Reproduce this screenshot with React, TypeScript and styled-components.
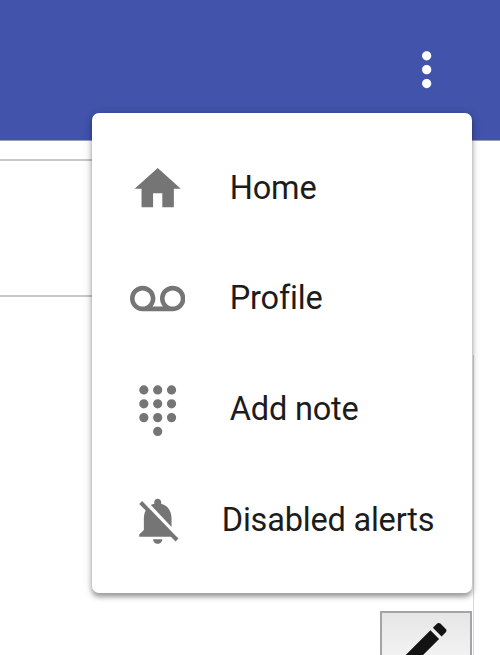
import React from "react";
import styled, { createGlobalStyle } from "styled-components";

const GlobalStyle = createGlobalStyle`
  * { box-sizing: border-box; }
  html, body { margin: 0; overflow: hidden; background: #fff; }
  body { font-family: Roboto, sans-serif; }
`;

const Page = styled.div`
  position: relative;
  display: flex;
  flex-direction: column;
  width: 500px;
  height: 655px;
  overflow: hidden;
  background: #fff;
`;

const Toolbar = styled.header`
  display: flex;
  flex: none;
  align-items: flex-start;
  justify-content: flex-end;
  height: 140.5px;
  padding: 41.5px 46px 0 0;
  background: linear-gradient(#4153aa, #4153aa) 0 0 / 100% 140px no-repeat, #9a9eb8;
`;

const IconButton = styled.button`
  display: flex;
  padding: 0;
  border: 0;
  background: none;
  color: #fff;
`;

const Glyph = styled.svg`
  display: block;
  flex: none;
  width: 55.4px;
  height: 55.4px;
  fill: currentColor;
`;

const Content = styled.main`
  display: flex;
  flex: 1;
  flex-direction: column;
  width: 474px;
  padding-top: 18.5px;
`;

const Field = styled.div`
  flex: none;
  width: 460px;
  height: 138px;
  border: 2px solid #c8c8c8;
  border-width: 2px 0;
`;

const Panel = styled.div`
  display: flex;
  flex: 1;
  align-items: flex-end;
  justify-content: flex-end;
  margin-top: 58px;
  padding-right: 1px;
  border-right: 1px solid #d8d8d8;
`;

const EditButton = styled.button`
  display: flex;
  flex: none;
  width: 92px;
  height: 44px;
  padding: 2.7px 0 0 15.6px;
  overflow: hidden;
  border: 2px solid #a3a3a8;
  border-bottom: 0;
  background: linear-gradient(#e6e6e6, #f2f2f2);
  color: #131313;
`;

const Menu = styled.ul`
  position: absolute;
  top: 113px;
  left: 92px;
  display: flex;
  flex-direction: column;
  width: 380px;
  height: 479.5px;
  margin: 0;
  padding: 20.9px 0 0;
  border-radius: 7px;
  background: #fff;
  box-shadow: 0 4px 4px rgba(0, 0, 0, 0.25), 0 2px 8px rgba(0, 0, 0, 0.26);
  list-style: none;
`;

const MenuItem = styled.li`
  display: flex;
  flex: none;
  align-items: center;
  height: 110.6px;
  padding-left: 37.5px;
  color: #757575;
`;

const Label = styled.span<{ $gap: number }>`
  margin: -2.6px 0 0 ${(p) => p.$gap}px;
  color: #1c1c1c;
  font-size: 32.5px;
  letter-spacing: -0.2px;
  line-height: 40px;
  white-space: nowrap;
`;

const paths = {
  more: "M12 8c1.1 0 2-.9 2-2s-.9-2-2-2-2 .9-2 2 .9 2 2 2zm0 2c-1.1 0-2 .9-2 2s.9 2 2 2 2-.9 2-2-.9-2-2-2zm0 6c-1.1 0-2 .9-2 2s.9 2 2 2 2-.9 2-2-.9-2-2-2z",
  home: "M10 20v-6h4v6h5v-8h3L12 3 2 12h3v8z",
  voicemail:
    "M18.5 6C15.46 6 13 8.46 13 11.5c0 1.33.47 2.55 1.26 3.5H9.74c.79-.95 1.26-2.17 1.26-3.5C11 8.46 8.54 6 5.5 6S0 8.46 0 11.5 2.46 17 5.5 17h13c3.04 0 5.5-2.46 5.5-5.5S21.54 6 18.5 6zm-13 9C3.57 15 2 13.43 2 11.5S3.57 8 5.5 8 9 9.57 9 11.5 7.43 15 5.5 15zm13 0c-1.93 0-3.5-1.57-3.5-3.5S16.57 8 18.5 8 22 9.57 22 11.5 20.43 15 18.5 15z",
  dialpad: [
    [6, 3], [12, 3], [18, 3],
    [6, 9], [12, 9], [18, 9],
    [6, 15], [12, 15], [18, 15],
    [12, 21],
  ]
    .map(([x, y]) => `M${x - 2} ${y}a2 2 0 1 0 4 0a2 2 0 1 0-4 0z`)
    .join(""),
  alertsOff:
    "M20 18.69L7.84 6.14 5.27 3.49 4 4.76l2.8 2.8v.01c-.52.99-.8 2.16-.8 3.42v5l-2 2v1h13.73l2 2L21 19.72l-1-1.03zM12 22c1.11 0 2-.89 2-2h-4c0 1.11.89 2 2 2zm6-7.32V11c0-3.08-1.64-5.64-4.5-6.32V4c0-.83-.67-1.5-1.5-1.5s-1.5.67-1.5 1.5v.68c-.15.03-.29.08-.42.12-.1.03-.2.07-.3.11h-.01c-.01 0-.01 0-.02.01-.23.09-.46.2-.68.31 0 0-.01 0-.01.01L18 14.68z",
  edit: "M3 17.25V21h3.75L17.81 9.94l-3.75-3.75L3 17.25zM20.71 7.04c.39-.39.39-1.02 0-1.41l-2.34-2.34c-.39-.39-1.02-.39-1.41 0l-1.83 1.83 3.75 3.75 1.83-1.83z",
};

type IconName = keyof typeof paths;

const Icon = ({ name }: { name: IconName }) => (
  <Glyph viewBox="0 0 24 24" aria-hidden="true">
    <path d={paths[name]} />
  </Glyph>
);

const items: { icon: IconName; label: string; gap: number }[] = [
  { icon: "home", label: "Home", gap: 44.9 },
  { icon: "voicemail", label: "Profile", gap: 44.9 },
  { icon: "dialpad", label: "Add note", gap: 44.9 },
  { icon: "alertsOff", label: "Disabled alerts", gap: 36.9 },
];

export default function App() {
  return (
    <Page>
      <GlobalStyle />
      <Toolbar>
        <IconButton aria-label="More options">
          <Icon name="more" />
        </IconButton>
      </Toolbar>
      <Content>
        <Field />
        <Panel>
          <EditButton aria-label="Edit">
            <Icon name="edit" />
          </EditButton>
        </Panel>
      </Content>
      <Menu>
        {items.map((item) => (
          <MenuItem key={item.label}>
            <Icon name={item.icon} />
            <Label $gap={item.gap}>{item.label}</Label>
          </MenuItem>
        ))}
      </Menu>
    </Page>
  );
}
